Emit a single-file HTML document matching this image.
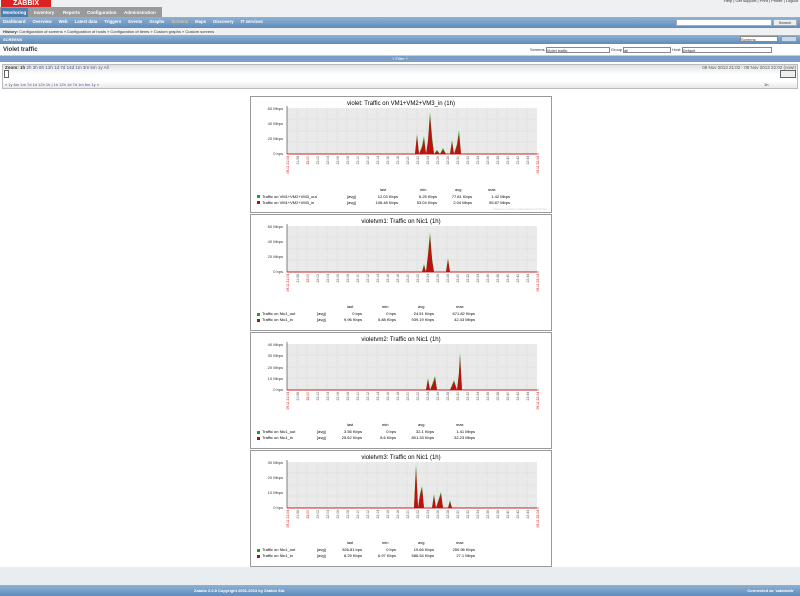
<!DOCTYPE html>
<html><head><meta charset="utf-8"><style>
*{margin:0;padding:0;box-sizing:border-box}
body{width:800px;height:596px;background:#fff;font-family:"Liberation Sans",sans-serif;font-size:5px;color:#333;position:relative;overflow:hidden}
.a{position:absolute}
.tab{position:absolute;top:8px;height:9px;color:#fff;font-weight:bold;font-size:4.5px;line-height:9px;padding:0 2px;white-space:nowrap}
.nav span{margin-right:7px;white-space:nowrap}
</style></head><body>
<div class="a" style="left:0;top:0;width:800px;height:18px;background:#eef0f2"></div>
<div class="a" style="left:1px;top:0;width:50px;height:7px;background:#d22;color:#fff;font-size:7px;font-weight:bold;line-height:7px;text-align:center">ZABBIX</div>
<div class="a" style="right:2px;top:-2px;font-size:4px;color:#333">Help | Get support | Print | Profile | Logout</div>
<div class="a" style="left:0;top:7px;width:162px;height:10px;background:#9a9a9a"></div>
<div class="tab" style="left:1px;background:#4f7fae">Monitoring</div>
<div class="tab" style="left:32px">Inventory</div><div class="tab" style="left:61px">Reports</div><div class="tab" style="left:85px">Configuration</div><div class="tab" style="left:122px">Administration</div>
<div class="a" style="left:0;top:17px;width:800px;height:11px;background:linear-gradient(#8fb1d3,#5f8cbb)"></div>
<div class="a nav" style="left:3px;top:19px;font-size:4.3px;color:#fff;font-weight:bold;white-space:nowrap"><span>Dashboard</span><span>Overview</span><span>Web</span><span>Latest data</span><span>Triggers</span><span>Events</span><span>Graphs</span><span style="color:#f4c76a">Screens</span><span>Maps</span><span>Discovery</span><span>IT services</span></div>
<div class="a" style="left:676px;top:19px;width:96px;height:7px;background:#fff;border:1px solid #aaa"></div>
<div class="a" style="left:773px;top:19px;width:24px;height:7px;background:#eee;border:1px solid #aaa;font-size:4px;text-align:center;line-height:6px">Search</div>
<div class="a" style="left:0;top:28px;width:800px;height:7px;background:#eef0f2;font-size:4px;line-height:7px;padding-left:3px"><b>History:</b> Configuration of screens » Configuration of hosts » Configuration of items » Custom graphs » Custom screens</div>
<div class="a" style="left:0;top:35px;width:800px;height:9px;background:linear-gradient(#8fb1d3,#5f8cbb);color:#fff;font-size:4px;font-weight:bold;line-height:9px;padding-left:3px">SCREENS</div>
<div class="a" style="left:740px;top:36px;width:38px;height:6px;background:#fff;border:1px solid #888;font-size:4px;line-height:5px">Screens</div>
<div class="a" style="left:781px;top:36px;width:16px;height:6px;background:#c8d8ea;border:1px solid #89a"></div>
<div class="a" style="left:0;top:44px;width:800px;height:12px;background:#fff;border-bottom:1px solid #ccc;font-size:6px;font-weight:bold;line-height:12px;padding-left:3px">Violet traffic</div>
<div class="a" style="left:530px;top:47px;font-size:4px;white-space:nowrap">Screens <span style="display:inline-block;width:64px;height:6px;border:1px solid #888;vertical-align:middle">Violet traffic</span> Group <span style="display:inline-block;width:48px;height:6px;border:1px solid #888;vertical-align:middle">all</span> Host <span style="display:inline-block;width:90px;height:6px;border:1px solid #888;vertical-align:middle">Default</span></div>
<div class="a" style="left:0;top:56px;width:800px;height:6px;background:#7a9fc6;color:#fff;font-size:4px;text-align:center;line-height:6px">˅ Filter ˅</div>
<div class="a" style="left:2px;top:64px;width:796px;height:25px;border:1px solid #bbb;background:linear-gradient(#dde1e5,#fff 40%,#fff 70%,#e6e8ea)"></div>
<div class="a" style="left:5px;top:65px;font-size:4.5px;white-space:nowrap"><b>Zoom:</b> <b>1h</b> <span style="color:#558">2h 3h 6h 12h 1d 7d 14d 1m 3m 6m 1y All</span></div>
<div class="a" style="right:4px;top:65px;font-size:4.5px;color:#555">09 Nov 2013 21:02 - 09 Nov 2013 22:02 (now!)</div>
<div class="a" style="left:4px;top:70px;width:5px;height:8px;border:1px solid #666;background:#fff"></div>
<div class="a" style="left:780px;top:70px;width:16px;height:8px;border:1px solid #666;background:#eee"></div>
<div class="a" style="left:5px;top:82px;font-size:4px;color:#558;white-space:nowrap">« 1y 6m 1m 7d 1d 12h 1h | 1h 12h 1d 7d 1m 6m 1y »</div>
<div class="a" style="left:764px;top:82px;font-size:4px">1h</div>
<div class="a" style="left:0;top:567px;width:800px;height:18px;background:#e9edf0"></div>
<div class="a" style="left:0;top:585px;width:800px;height:11px;background:linear-gradient(#8fb1d3,#5f8cbb);color:#fff;font-size:4px;line-height:11px;font-weight:bold"><span style="position:absolute;left:194px">Zabbix 2.0.8 Copyright 2001-2013 by Zabbix SIA</span><span style="position:absolute;right:6px">Connected as 'zabbixdb'</span></div>

<svg class="a" style="left:250px;top:96px" width="302" height="472" font-family="Liberation Sans" font-size="4">
<defs>
<g id="grid">
<rect x="37" y="12" width="250" height="46" fill="#eaeaea"/>
<g stroke="#ccc" stroke-width="0.5" stroke-dasharray="1,1">
<path d="M37 23H287M37 35H287M37 46H287M47 12V58M57 12V58M67 12V58M77 12V58M87 12V58M97 12V58M107 12V58M117 12V58M127 12V58M137 12V58M147 12V58M157 12V58M167 12V58M177 12V58M187 12V58M197 12V58M207 12V58M217 12V58M227 12V58M237 12V58M247 12V58M257 12V58M267 12V58M277 12V58"/>
</g>
<path d="M37 10V58H289" stroke="#333" stroke-width="0.6" fill="none"/>
<line x1="37" y1="58" x2="287" y2="58" stroke="#c00" stroke-width="0.8"/>
<g fill="#555" font-size="3.4">
<text transform="translate(39,60) rotate(-90)" text-anchor="end" fill="#c00">09.11 21:04</text>
<text transform="translate(49,60) rotate(-90)" text-anchor="end">21:58</text>
<text transform="translate(59,60) rotate(-90)" text-anchor="end" fill="#c00">22:00</text>
<text transform="translate(69,60) rotate(-90)" text-anchor="end">22:02</text>
<text transform="translate(79,60) rotate(-90)" text-anchor="end">22:04</text>
<text transform="translate(89,60) rotate(-90)" text-anchor="end">22:06</text>
<text transform="translate(99,60) rotate(-90)" text-anchor="end">22:08</text>
<text transform="translate(109,60) rotate(-90)" text-anchor="end">22:10</text>
<text transform="translate(119,60) rotate(-90)" text-anchor="end">22:12</text>
<text transform="translate(129,60) rotate(-90)" text-anchor="end">22:14</text>
<text transform="translate(139,60) rotate(-90)" text-anchor="end">22:16</text>
<text transform="translate(149,60) rotate(-90)" text-anchor="end">22:18</text>
<text transform="translate(159,60) rotate(-90)" text-anchor="end">22:20</text>
<text transform="translate(169,60) rotate(-90)" text-anchor="end">22:22</text>
<text transform="translate(179,60) rotate(-90)" text-anchor="end">22:24</text>
<text transform="translate(189,60) rotate(-90)" text-anchor="end">22:26</text>
<text transform="translate(199,60) rotate(-90)" text-anchor="end">22:28</text>
<text transform="translate(209,60) rotate(-90)" text-anchor="end">22:30</text>
<text transform="translate(219,60) rotate(-90)" text-anchor="end">22:32</text>
<text transform="translate(229,60) rotate(-90)" text-anchor="end">22:34</text>
<text transform="translate(239,60) rotate(-90)" text-anchor="end">22:36</text>
<text transform="translate(249,60) rotate(-90)" text-anchor="end">22:38</text>
<text transform="translate(259,60) rotate(-90)" text-anchor="end">22:40</text>
<text transform="translate(269,60) rotate(-90)" text-anchor="end">22:42</text>
<text transform="translate(279,60) rotate(-90)" text-anchor="end">22:44</text>
<text transform="translate(289,60) rotate(-90)" text-anchor="end" fill="#c00">09.11 22:04</text>
</g>
<rect x="7" y="99" width="3" height="3" fill="#1a1"/><rect x="7" y="105" width="3" height="3" fill="#a11"/>
</g>
</defs>
<!-- graph 1 -->
<rect x="0.5" y="0.5" width="301" height="116" fill="#fff" stroke="#999"/>
<use href="#grid"/>
<text x="151" y="9" text-anchor="middle" font-size="6">violet: Traffic on VM1+VM2+VM3_in (1h)</text>
<g fill="#333" text-anchor="end"><text x="33" y="14">60 Mbps</text><text x="33" y="29">40 Mbps</text><text x="33" y="44">20 Mbps</text><text x="33" y="59">0 bps</text></g>
<polygon fill="#2a2" points="165,58 167,38 169,58 172,50 174,40 176,58 178,44 180,16 182,40 184,58 187,54 190,58 193,52 196,58 200,58 202,44 204,58 207,48 209,34 211,58"/>
<polygon fill="#b11" points="165,58 167,40 169,58 172,52 174,43 176,58 178,46 180,20 182,44 184,58 187,55 190,58 193,54 196,58 200,58 202,46 204,58 207,50 209,38 211,58"/>
<text x="130" y="95">last</text><text x="170" y="95">min</text><text x="205" y="95">avg</text><text x="238" y="95">max</text>
<text x="12" y="102">Traffic on VM1+VM2+VM3_out</text><text x="97" y="102">[avg]</text><text x="148" y="102" text-anchor="end">12.03 Kbps</text><text x="187" y="102" text-anchor="end">6.25 Kbps</text><text x="222" y="102" text-anchor="end">77.81 Kbps</text><text x="260" y="102" text-anchor="end">1.42 Mbps</text>
<text x="12" y="108">Traffic on VM1+VM2+VM3_in</text><text x="97" y="108">[avg]</text><text x="148" y="108" text-anchor="end">106.48 Kbps</text><text x="187" y="108" text-anchor="end">53.04 Kbps</text><text x="222" y="108" text-anchor="end">2.04 Mbps</text><text x="260" y="108" text-anchor="end">55.87 Mbps</text>
<text x="297" y="114" text-anchor="end" fill="#ccc" font-size="3">Data from history. Generated in 0.00 sec</text>
<!-- graph 2 -->
<g transform="translate(0,118)">
<rect x="0.5" y="0.5" width="301" height="116" fill="#fff" stroke="#999"/>
<use href="#grid"/>
<text x="151" y="9" text-anchor="middle" font-size="6">violetvm1: Traffic on Nic1 (1h)</text>
<g fill="#333" text-anchor="end"><text x="33" y="14">60 Mbps</text><text x="33" y="29">40 Mbps</text><text x="33" y="44">20 Mbps</text><text x="33" y="59">0 bps</text></g>
<polygon fill="#2a2" points="172,58 174,50 176,58 178,40 180,18 182,44 184,58 196,58 198,44 200,58"/>
<polygon fill="#b11" points="172,58 174,52 176,58 178,43 180,22 182,46 184,58 196,58 198,46 200,58"/>
<text x="97" y="94">last</text><text x="132" y="94">min</text><text x="168" y="94">avg</text><text x="206" y="94">max</text>
<text x="12" y="101">Traffic on Nic1_out</text><text x="67" y="101">[avg]</text><text x="112" y="101" text-anchor="end">0 bps</text><text x="146" y="101" text-anchor="end">0 bps</text><text x="184" y="101" text-anchor="end">24.51 Kbps</text><text x="225" y="101" text-anchor="end">671.82 Kbps</text>
<text x="12" y="107">Traffic on Nic1_in</text><text x="67" y="107">[avg]</text><text x="112" y="107" text-anchor="end">9.96 Kbps</text><text x="146" y="107" text-anchor="end">5.88 Kbps</text><text x="184" y="107" text-anchor="end">939.19 Kbps</text><text x="225" y="107" text-anchor="end">42.43 Mbps</text>
</g>
<!-- graph 3 -->
<g transform="translate(0,236)">
<rect x="0.5" y="0.5" width="301" height="116" fill="#fff" stroke="#999"/>
<use href="#grid"/>
<text x="151" y="9" text-anchor="middle" font-size="6">violetvm2: Traffic on Nic1 (1h)</text>
<g fill="#333" text-anchor="end"><text x="33" y="14">40 Mbps</text><text x="33" y="25">30 Mbps</text><text x="33" y="37">20 Mbps</text><text x="33" y="48">10 Mbps</text><text x="33" y="59">0 bps</text></g>
<polygon fill="#2a2" points="176,58 178,46 180,58 183,50 185,44 187,58 200,58 204,48 207,58 209,40 210,20 212,58"/>
<polygon fill="#b11" points="176,58 178,48 180,58 183,52 185,46 187,58 200,58 204,50 207,58 209,42 210,24 212,58"/>
<text x="97" y="94">last</text><text x="132" y="94">min</text><text x="168" y="94">avg</text><text x="206" y="94">max</text>
<text x="12" y="101">Traffic on Nic1_out</text><text x="67" y="101">[avg]</text><text x="112" y="101" text-anchor="end">3.55 Kbps</text><text x="146" y="101" text-anchor="end">0 bps</text><text x="184" y="101" text-anchor="end">32.1 Kbps</text><text x="225" y="101" text-anchor="end">1.41 Mbps</text>
<text x="12" y="107">Traffic on Nic1_in</text><text x="67" y="107">[avg]</text><text x="112" y="107" text-anchor="end">25.62 Kbps</text><text x="146" y="107" text-anchor="end">8.6 Kbps</text><text x="184" y="107" text-anchor="end">801.33 Kbps</text><text x="225" y="107" text-anchor="end">32.23 Mbps</text>
</g>
<!-- graph 4 -->
<g transform="translate(0,354)">
<rect x="0.5" y="0.5" width="301" height="116" fill="#fff" stroke="#999"/>
<use href="#grid"/>
<text x="151" y="9" text-anchor="middle" font-size="6">violetvm3: Traffic on Nic1 (1h)</text>
<g fill="#333" text-anchor="end"><text x="33" y="14">30 Mbps</text><text x="33" y="29">20 Mbps</text><text x="33" y="44">10 Mbps</text><text x="33" y="59">0 bps</text></g>
<polygon fill="#2a2" points="164,58 166,14 168,58 170,44 172,36 174,58 182,58 184,44 186,58 189,48 191,42 193,58 198,58 200,50 202,58"/>
<polygon fill="#b11" points="164,58 166,18 168,58 170,46 172,38 174,58 182,58 184,46 186,58 189,50 191,44 193,58 198,58 200,52 202,58"/>
<text x="97" y="94">last</text><text x="132" y="94">min</text><text x="168" y="94">avg</text><text x="206" y="94">max</text>
<text x="12" y="101">Traffic on Nic1_out</text><text x="67" y="101">[avg]</text><text x="112" y="101" text-anchor="end">526.81 bps</text><text x="146" y="101" text-anchor="end">0 bps</text><text x="184" y="101" text-anchor="end">19.66 Kbps</text><text x="225" y="101" text-anchor="end">250.96 Kbps</text>
<text x="12" y="107">Traffic on Nic1_in</text><text x="67" y="107">[avg]</text><text x="112" y="107" text-anchor="end">8.29 Kbps</text><text x="146" y="107" text-anchor="end">6.97 Kbps</text><text x="184" y="107" text-anchor="end">586.54 Kbps</text><text x="225" y="107" text-anchor="end">27.1 Mbps</text>
</g>
</svg>
</body></html>
